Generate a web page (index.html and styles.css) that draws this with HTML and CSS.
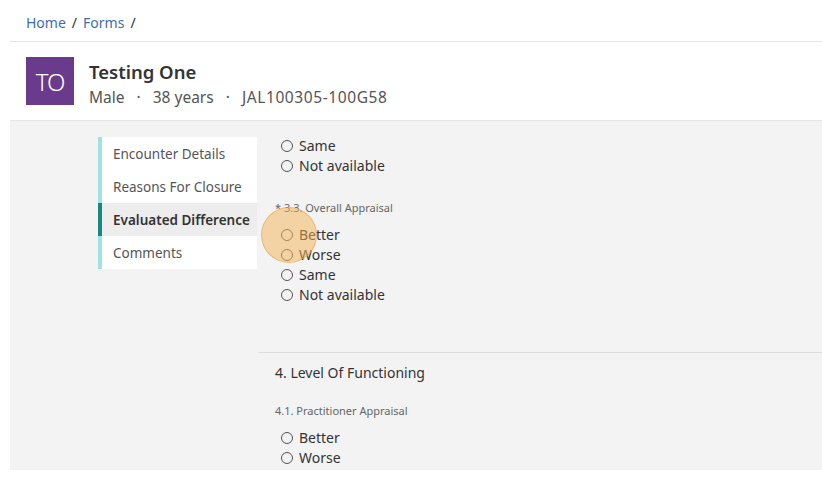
FILE: index.html
```html
<!DOCTYPE html>
<html lang="en">
<head>
<meta charset="utf-8">
<title>Forms</title>
<link rel="stylesheet" href="styles.css">
</head>
<body>
<div class="page">
  <nav class="crumbs">
    <a href="#">Home</a><span class="sep">/</span><a href="#">Forms</a><span class="sep">/</span>
  </nav>
  <header class="patient">
    <div class="avatar">TO</div>
    <div class="pinfo">
      <div class="pname">Testing One</div>
      <div class="pmeta">Male <span class="dot">·</span> 38 years <span class="dot">·</span> <span class="pid">JAL100305-100G58</span></div>
    </div>
  </header>
  <main class="main">
    <aside class="side">
      <div class="item">Encounter Details</div>
      <div class="item">Reasons For Closure</div>
      <div class="item active">Evaluated Difference</div>
      <div class="item">Comments</div>
    </aside>
    <section class="content">
      <div class="group first">
        <div class="opt"><span class="radio"></span>Same</div>
        <div class="opt"><span class="radio"></span>Not available</div>
      </div>
      <div class="group q">
        <div class="qlabel">* 3.3. Overall Appraisal</div>
        <div class="opts">
          <div class="opt"><span class="radio"></span>Better</div>
          <div class="opt"><span class="radio"></span>Worse</div>
          <div class="opt"><span class="radio"></span>Same</div>
          <div class="opt"><span class="radio"></span>Not available</div>
          <span class="click"></span>
        </div>
      </div>
      <div class="section">
        <div class="stitle">4. Level Of Functioning</div>
        <div class="qlabel">4.1. Practitioner Appraisal</div>
        <div class="opts">
          <div class="opt"><span class="radio"></span>Better</div>
          <div class="opt"><span class="radio"></span>Worse</div>
          <div class="opt"><span class="radio"></span>Same</div>
        </div>
      </div>
    </section>
  </main>
</div>
</body>
</html>
```
FILE: styles.css
```css
* { box-sizing: border-box; }
html, body { margin: 0; padding: 0; background: #fff; }
body {
  font-family: "Noto Sans", "Open Sans", sans-serif;
  color: #333;
  width: 822px;
  height: 481px;
  overflow: hidden;
}
.page { padding-left: 10px; }
.crumbs {
  height: 42px;
  border-bottom: 1px solid #e4e4e4;
  padding: 13px 0 0 16px;
  font-size: 14px;
  line-height: 20px;
  color: #333;
}
.crumbs a { color: #3f6ea8; text-decoration: none; }
.crumbs .sep { margin: 0 6px; color: #333; }
.patient {
  height: 79px;
  display: flex;
  align-items: flex-start;
  padding: 15px 0 0 16px;
  border-bottom: 1px solid #e6e6e6;
}
.avatar {
  width: 48px;
  height: 48px;
  background: #6a3b8c;
  color: #fff;
  font-size: 24px;
  font-weight: 300;
  display: flex;
  align-items: center;
  justify-content: center;
  letter-spacing: -1px;
  margin-right: 15px;
}
.pinfo { padding-top: 3px; }
.pname { font-size: 18.5px; font-weight: 600; line-height: 24px; color: #333; }
.pmeta { font-size: 15.5px; line-height: 22px; color: #555; margin-top: 2px; }
.pmeta .dot { margin: 0 8px; }
.pmeta .pid { letter-spacing: 0.6px; }
.main {
  height: 349px;
  background: #f3f3f3;
  display: flex;
  align-items: flex-start;
  overflow: hidden;
}
.side {
  margin: 16px 0 0 88px;
  width: 159px;
  background: #fff;
}
.item {
  height: 33px;
  line-height: 34px;
  padding-left: 11px;
  font-size: 13.5px;
  color: #555;
  border-left: 4px solid #9fe3e2;
  white-space: nowrap;
}
.item.active {
  border-left-color: #17877f;
  background: #ededed;
  font-weight: 600;
  color: #333;
}
.content {
  flex: 1;
  margin-left: 2px;
  padding-top: 15px;
}
.group, .section { padding-left: 16px; }
.opt {
  height: 20px;
  line-height: 20px;
  font-size: 14px;
  color: #333;
  display: flex;
  align-items: center;
  padding-left: 6px;
}
.radio {
  width: 12px;
  height: 12px;
  border: 1px solid #555;
  border-radius: 50%;
  margin-right: 6px;
  flex: none;
}
.q { margin-top: 25px; }
.qlabel {
  font-size: 11px;
  line-height: 14px;
  color: #666;
  margin-bottom: 10px;
}
.opts { position: relative; }
.click {
  position: absolute;
  left: -14px;
  top: -18px;
  width: 56px;
  height: 56px;
  border-radius: 50%;
  background: rgba(243, 178, 85, 0.5);
  border: 1px solid rgba(230, 150, 60, 0.45);
}
.section {
  margin-top: 47px;
  border-top: 1px solid #dcdcdc;
  padding-top: 10px;
}
.stitle {
  font-size: 14px;
  line-height: 20px;
  color: #333;
  margin-bottom: 21px;
}
```
